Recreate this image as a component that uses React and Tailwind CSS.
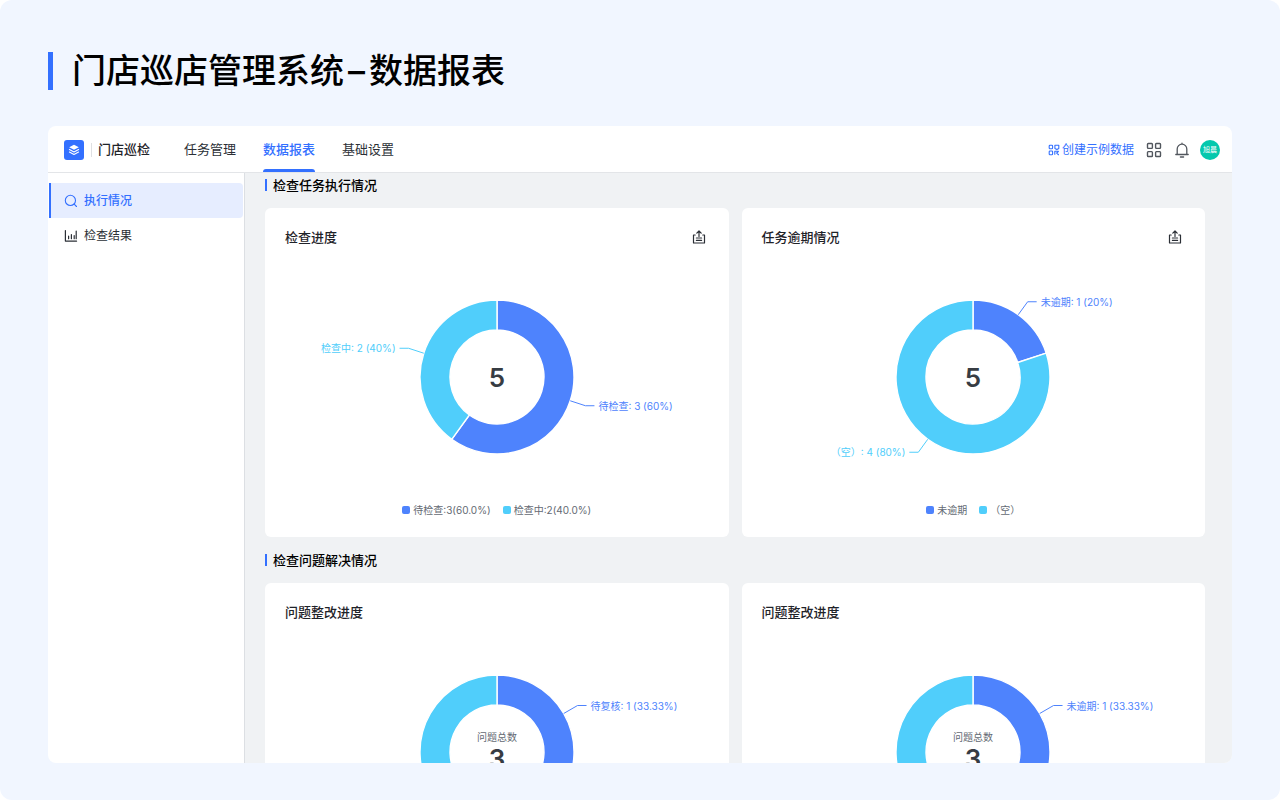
import React, { useState } from 'react';

const BLUE = '#4e83fd';
const CYAN = '#50cefb';

const navItems = ['任务管理', '数据报表', '基础设置'];

const sections = [
    {
        title: '检查任务执行情况',
        cards: [
            {
                title: '检查进度',
                exportable: true,
                total: 5,
                data: [
                    { value: 3, color: BLUE, label: '待检查: 3 (60%)', legend: '待检查:3(60.0%)' },
                    { value: 2, color: CYAN, label: '检查中: 2 (40%)', legend: '检查中:2(40.0%)' }
                ]
            },
            {
                title: '任务逾期情况',
                exportable: true,
                total: 5,
                data: [
                    { value: 1, color: BLUE, label: '未逾期: 1 (20%)', legend: '未逾期' },
                    { value: 4, color: CYAN, label: '（空）: 4 (80%)', legend: '（空）' }
                ]
            }
        ]
    },
    {
        title: '检查问题解决情况',
        cards: [
            {
                title: '问题整改进度',
                caption: '问题总数',
                total: 3,
                data: [
                    { value: 1, color: BLUE, label: '待复核: 1 (33.33%)' },
                    { value: 2, color: CYAN }
                ]
            },
            {
                title: '问题整改进度',
                caption: '问题总数',
                total: 3,
                data: [
                    { value: 1, color: BLUE, label: '未逾期: 1 (33.33%)' },
                    { value: 2, color: CYAN }
                ]
            }
        ]
    }
];

// 极坐标转直角坐标，0 为正上方，顺时针
const point = (ratio, radius) => {
    const angle = ratio * Math.PI * 2;
    return [Math.sin(angle) * radius, -Math.cos(angle) * radius];
};

const slicePath = (start, end, outer, inner) => {
    const large = end - start > 0.5 ? 1 : 0;
    const [x1, y1] = point(start, outer);
    const [x2, y2] = point(end, outer);
    const [x3, y3] = point(end, inner);
    const [x4, y4] = point(start, inner);
    return `M${x1} ${y1}A${outer} ${outer} 0 ${large} 1 ${x2} ${y2}L${x3} ${y3}A${inner} ${inner} 0 ${large} 0 ${x4} ${y4}Z`;
};

const LogoIcon = () => (
    <svg viewBox="0 0 20 20" className="w-5 h-5" aria-hidden="true">
        <rect width="20" height="20" rx="3" fill="#3370ff" />
        <path d="M10 4.8l4.8 2.5-4.8 2.5-4.8-2.5z" fill="#fff" />
        <path d="M5.4 9.6L10 12l4.6-2.4M5.4 12L10 14.4l4.6-2.4" fill="none" stroke="#fff" strokeWidth="1.1" strokeLinejoin="round" strokeLinecap="round" />
    </svg>
);

const SampleIcon = () => (
    <svg viewBox="0 0 12 12" className="w-3 h-3" fill="none" stroke="currentColor" strokeWidth="1.1" strokeLinejoin="round" aria-hidden="true">
        <rect x="1.2" y="1.2" width="3.4" height="3.6" rx="0.8" />
        <rect x="1.2" y="7" width="3.4" height="3.8" rx="0.8" />
        <path d="M6.9 1.2h3.9v3.3L8.9 5.6 6.9 4.5z" />
        <path d="M6.8 10.8V7.2h3.8M8.2 8.6l2.6 2.4M10.7 7.2L8.8 9.2" />
    </svg>
);

const AppsIcon = () => (
    <svg viewBox="0 0 16 16" className="w-4 h-4" fill="none" stroke="currentColor" strokeWidth="1.4" aria-hidden="true">
        <rect x="1.5" y="1.5" width="4.9" height="4.9" rx="0.8" />
        <rect x="9.6" y="1.5" width="4.9" height="4.9" rx="0.8" />
        <rect x="1.5" y="9.6" width="4.9" height="4.9" rx="0.8" />
        <rect x="9.6" y="9.6" width="4.9" height="4.9" rx="0.8" />
    </svg>
);

const BellIcon = () => (
    <svg viewBox="0 0 16 16" className="w-4 h-4" fill="none" stroke="currentColor" strokeWidth="1.3" strokeLinecap="round" aria-hidden="true">
        <path d="M3.2 12.4V7a4.8 4.8 0 0 1 9.6 0v5.4M1.8 12.5h12.4M8 2.1V1.2M6.4 15h3.2" />
    </svg>
);

const SearchIcon = () => (
    <svg viewBox="0 0 14 14" className="w-3.5 h-3.5" fill="none" stroke="currentColor" strokeWidth="1.1" strokeLinecap="round" aria-hidden="true">
        <circle cx="6.4" cy="6.4" r="5.1" />
        <path d="M10.2 10.2l2.3 2.3" />
    </svg>
);

const BarsIcon = () => (
    <svg viewBox="0 0 14 14" className="w-3.5 h-3.5" fill="none" stroke="currentColor" strokeWidth="1.2" strokeLinecap="round" strokeLinejoin="round" aria-hidden="true">
        <path d="M1.4 1.6v10.5h11.2M4.6 7.2v2.5M7.4 5.6v4.1M10.2 6.6v3.1M12.2 2v7.7" />
    </svg>
);

const ExportIcon = () => (
    <svg viewBox="0 0 14 14" className="w-3.5 h-3.5" fill="none" stroke="currentColor" strokeWidth="1.2" strokeLinecap="round" strokeLinejoin="round" aria-hidden="true">
        <path d="M3.2 5H1.5v8h11V5h-1.7M7 6.4V1.2M4.8 3.2L7 1l2.2 2.2M4.4 8h5.2M4.4 10.4h5.2" />
    </svg>
);

/**
 * 环形图，标签引导线按扇区中点计算
 */
const DonutChart = ({ data, total, caption }) => {
    let offset = 0;
    const slices = data.map((item) => {
        const start = offset;
        offset += item.value / total;
        return { ...item, start, end: offset };
    });

    return (
        <svg viewBox="-200 -100 400 200" className="w-[400px] h-[200px] max-w-full mx-auto block" role="img">
            {slices.map((slice) => {
                const mid = (slice.start + slice.end) / 2;
                const side = mid < 0.5 ? 1 : -1;
                const [x1, y1] = point(mid, 77);
                const [x2, y2] = point(mid, 93);
                const x3 = x2 + side * 9;
                return (
                    <g key={slice.color}>
                        <path d={slicePath(slice.start, slice.end, 77, 47)} fill={slice.color} stroke="#fff" strokeWidth="1.4" />
                        {slice.label && (
                            <>
                                <path d={`M${x1} ${y1}L${x2} ${y2}H${x3}`} fill="none" stroke={slice.color} />
                                <text x={x3 + side * 4} y={y2 + 4} textAnchor={side > 0 ? 'start' : 'end'} fill={slice.color} className="text-[10px]">
                                    {slice.label}
                                </text>
                            </>
                        )}
                    </g>
                );
            })}
            {caption && (
                <text y="-11" textAnchor="middle" fill="#646a73" className="text-[10px]">{caption}</text>
            )}
            <text y={caption ? 16 : 10} textAnchor="middle" fill="#373c43" className="text-[26px] font-semibold">{total}</text>
        </svg>
    );
};

const ChartCard = ({ card }) => (
    <article className="bg-white rounded-md h-[329px] px-5 pt-[19px]">
        <div className="flex items-center justify-between h-5 pr-[3px]">
            <h3 className="text-[13px] leading-5 font-medium text-[#1f2329]">{card.title}</h3>
            {card.exportable && (
                <button type="button" aria-label="导出" className="text-[#2b2f36] cursor-pointer">
                    <ExportIcon />
                </button>
            )}
        </div>
        <div className="mt-[30px]">
            <DonutChart data={card.data} total={card.total} caption={card.caption} />
        </div>
        <ul className="mt-[25px] flex justify-center gap-3 text-[10px] leading-4 text-[#646a73]">
            {card.data.filter((item) => item.legend).map((item) => (
                <li key={item.legend} className="flex items-center gap-[3px]">
                    <span className="w-2 h-2 rounded-xs" style={{ backgroundColor: item.color }} />
                    {item.legend}
                </li>
            ))}
        </ul>
    </article>
);

const App = () => {
    const [activeNav, setActiveNav] = useState('数据报表');

    return (
        <div className="bg-white font-['Inter','Noto_Sans_CJK_SC',sans-serif]">
            <div className="h-screen flex flex-col rounded-xl bg-[#f1f6ff] px-12 pt-12 pb-[37px]">
                <div className="flex items-center gap-[19px] mb-8">
                    <span className="w-[5px] h-[38px] bg-[#3370ff]" />
                    <h1 className="text-[34px] leading-[46px] font-medium text-black">
                        门店巡店管理系统<span className="mx-1">–</span>数据报表
                    </h1>
                </div>

                <div className="flex-1 min-h-0 flex flex-col rounded-lg overflow-hidden bg-white">
                    {/* 顶部导航 */}
                    <header className="flex items-stretch h-[47px] shrink-0 pl-4 pr-3 border-b border-[#e3e5e8]">
                        <div className="flex items-center pt-0.5">
                            <LogoIcon />
                            <span className="w-px h-3.5 ml-[7px] mr-1.5 bg-[#dee0e3]" />
                            <span className="text-[13px] font-medium text-[#1f2329]">门店巡检</span>
                        </div>
                        <nav className="flex items-stretch gap-[27px] ml-[34px]">
                            {navItems.map((item) => (
                                <a
                                    key={item}
                                    href="#"
                                    onClick={() => setActiveNav(item)}
                                    className={`relative flex items-center pt-0.5 text-[13px] ${activeNav === item ? 'text-[#3370ff] font-medium' : 'text-[#2b2f36]'}`}
                                >
                                    {item}
                                    {activeNav === item && (
                                        <span className="absolute inset-x-0 bottom-0 h-[3px] rounded-t-sm bg-[#3370ff]" />
                                    )}
                                </a>
                            ))}
                        </nav>
                        <div className="flex items-center ml-auto pt-0.5 text-[#51565d]">
                            <button type="button" className="flex items-center gap-0.5 text-xs text-[#3370ff] cursor-pointer">
                                <SampleIcon />
                                创建示例数据
                            </button>
                            <button type="button" aria-label="应用" className="ml-3 cursor-pointer"><AppsIcon /></button>
                            <button type="button" aria-label="通知" className="ml-3 cursor-pointer"><BellIcon /></button>
                            <span className="w-5 h-5 ml-2.5 rounded-full bg-[#04c8ad] text-white text-[7px] flex items-center justify-center">旭晨</span>
                        </div>
                    </header>

                    <div className="flex-1 min-h-0 flex">
                        {/* 侧边栏 */}
                        <aside className="w-[197px] shrink-0 border-r border-[#dcdfe3] pt-2.5 pr-px text-xs">
                            <a href="#" className="flex items-center gap-1.5 h-[35px] ml-px pl-[13px] border-l-2 border-[#3370ff] rounded-r bg-[#e6edff] font-medium text-[#3370ff]">
                                <SearchIcon />
                                执行情况
                            </a>
                            <a href="#" className="flex items-center gap-1.5 h-[35px] pl-4 text-[#2b2f36]">
                                <BarsIcon />
                                检查结果
                            </a>
                        </aside>

                        {/* 图表区域 */}
                        <main className="flex-1 min-w-0 overflow-hidden bg-[#f0f2f4] pl-5 pr-[27px]">
                            {sections.map((section) => (
                                <section key={section.title} className="pt-0.5 pb-[11px]">
                                    <div className="flex items-center gap-1.5 h-5 mb-[13px]">
                                        <span className="w-0.5 h-3 bg-[#3370ff]" />
                                        <h2 className="text-[13px] leading-5 font-medium text-black">{section.title}</h2>
                                    </div>
                                    <div className="grid grid-cols-2 gap-[13px]">
                                        {section.cards.map((card, index) => (
                                            <ChartCard key={index} card={card} />
                                        ))}
                                    </div>
                                </section>
                            ))}
                        </main>
                    </div>
                </div>
            </div>
        </div>
    );
};

export default App;
